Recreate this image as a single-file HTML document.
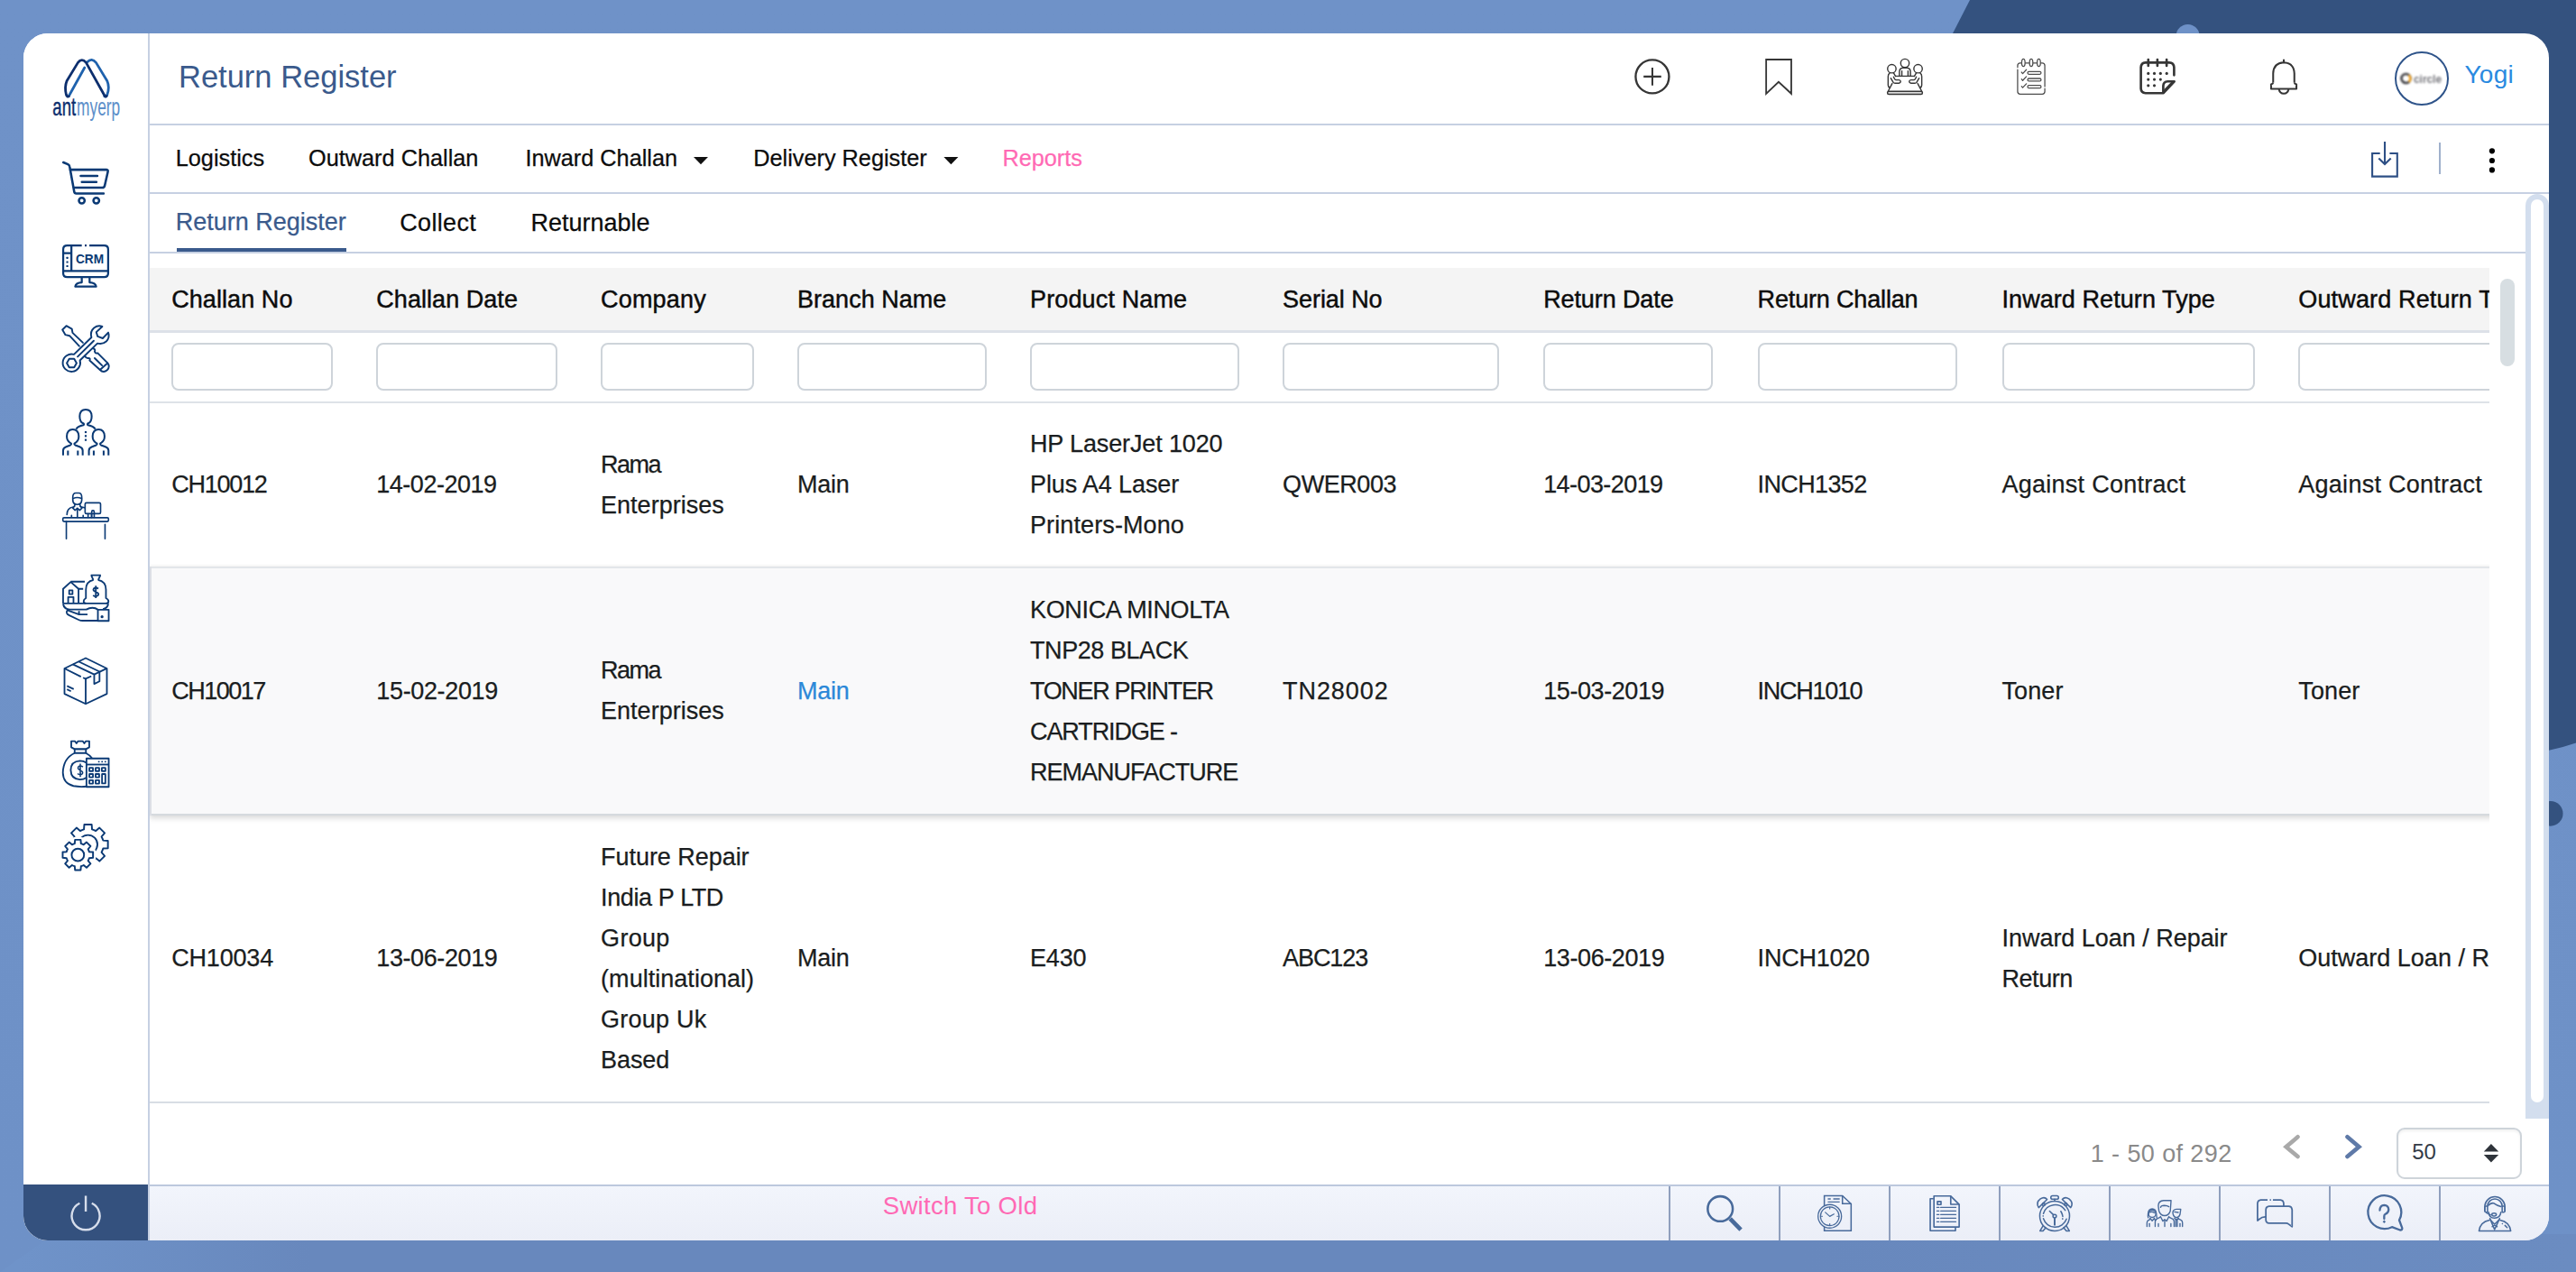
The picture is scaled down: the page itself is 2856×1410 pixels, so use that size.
<!DOCTYPE html>
<html>
<head>
<meta charset="utf-8">
<title>Return Register</title>
<style>
*{box-sizing:border-box;margin:0;padding:0}
html,body{width:2856px;height:1410px;overflow:hidden}
body{font-family:"Liberation Sans",sans-serif;background:#6e91c7;position:relative;color:#212529;-webkit-font-smoothing:antialiased}
#bg{position:absolute;left:0;top:0;width:2856px;height:1410px}
#card{position:absolute;left:26px;top:37px;width:2800px;height:1338px;background:#fff;border-radius:27px;overflow:hidden}
.abs{position:absolute}
.t{position:absolute;white-space:nowrap;line-height:1}
.hl{position:absolute;height:2px;background:#c6d0e2}
.vl{position:absolute;width:2px;background:#c6d0e2}
/* sidebar */
#side{position:absolute;left:0;top:0;width:139px;height:1338px;background:#fff}
.sic{position:absolute;left:43px;width:52px;height:52px}
.sic svg{width:52px;height:52px;overflow:visible}
/* header */
.title{left:172px;top:30.6px;font-size:34.5px;color:#3a5a8c}
.hic{position:absolute}
/* nav */
.nav{font-size:25.3px;top:125.6px;color:#0c0c0c;-webkit-text-stroke:0.25px}
.tab{font-size:27px;color:#0c0c0c;-webkit-text-stroke:0.25px}
/* table */
#tbl{position:absolute;left:140px;top:260px;width:2594px;height:927px;overflow:hidden}
.th{position:absolute;top:0;font-size:27px;color:#0c0c0c;-webkit-text-stroke-width:0.45px;white-space:nowrap;line-height:1}
.fi{position:absolute;top:82.8px;height:53.6px;border:2px solid #ced4da;border-radius:8px;background:#fff}
.row{position:absolute;left:0;width:2700px}
.c{position:absolute;top:0;height:100%;display:flex;align-items:center;font-size:27px;line-height:45px;white-space:nowrap;color:#1a1d20;-webkit-text-stroke-width:0.25px}
.r2{background:#f9f9fa;box-shadow:inset 2px 0 0 #dcdfe5,inset 0 2px 0 #e3e6ea,inset 0 -2px 0 #d6dade,0 3px 6px rgba(0,0,0,.15),0 -1px 3px rgba(0,0,0,.04)}
/* footer */
#foot{position:absolute;left:140px;top:1277px;width:2660px;height:61px;background:linear-gradient(#f2f5fc,#ebeef7)}
.fc{position:absolute;top:0;height:61px;width:2px;background:#8f9fbd}
</style>
</head>
<body>
<svg id="bg" viewBox="0 0 2856 1410">
  <defs>
    <linearGradient id="bgg" x1="0" y1="0" x2="0" y2="1">
      <stop offset="0" stop-color="#6f92c8"/>
      <stop offset="1" stop-color="#6e91c7"/>
    </linearGradient>
  </defs>
  <rect width="2856" height="1410" fill="url(#bgg)"/>
  <linearGradient id="bgb" x1="0" y1="0" x2="1" y2="0">
    <stop offset="0.008" stop-color="#6f93c9"/><stop offset="0.12" stop-color="#6888bd"/><stop offset="0.7" stop-color="#6888bd"/><stop offset="1" stop-color="#6b8cc1"/>
  </linearGradient>
  <path d="M60 1368 H2856 V1410 H0 Z" fill="url(#bgb)"/>
  <path d="M2184 0 L2856 0 L2856 823.4 Q2841 828.5 2826 831.8 L2500 900 L2165 37 Z" fill="#34527f"/>
  <circle cx="2425.6" cy="40" r="13" fill="#6e91c7"/>
  <circle cx="2827.7" cy="901.8" r="13.85" fill="#34527f"/>
</svg>

<div id="card">
  <!-- SIDEBAR -->
  <div id="side">
<svg class="abs" style="left:24px;top:18px" width="90" height="85" viewBox="0 0 1347 1272" overflow="visible">
<g fill="none" stroke-width="42" stroke-linecap="round" stroke-linejoin="round">
<path d="M400 760 L655 300" stroke="#1f62ad"/>
<path d="M700 205 Q775 130 845 215 L1030 520 Q1075 620 1030 750 Q1015 790 985 775" stroke="#1f62ad"/>
<path d="M395 775 Q365 790 350 745 Q320 620 360 520 L545 215 Q610 130 680 215 L985 760 Q1000 790 1020 770" stroke="#0d2f6e"/>
</g>
<text x="125" y="1100" font-family="Liberation Sans, sans-serif" font-size="400" fill="#0d2f6e" stroke="#0d2f6e" stroke-width="7" textLength="385" lengthAdjust="spacingAndGlyphs">ant</text>
<text x="525" y="1100" font-family="Liberation Sans, sans-serif" font-size="400" fill="#5d8fca" stroke="#5d8fca" stroke-width="1" textLength="720" lengthAdjust="spacingAndGlyphs">myerp</text>
</svg>
<svg class="abs" style="left:43px;top:142px" width="52" height="52" viewBox="176 176 1018 1018" overflow="visible"><g fill="none" stroke="#0b3a75" stroke-width="50" stroke-linecap="round" stroke-linejoin="round" >
<path d="M200 195 L300 238 Q332 254 338 292 L436 832 Q442 870 482 870 L1075 870"/>
<path d="M352 355 L1138 355 Q1176 358 1166 400 L1096 708 Q1086 745 1048 745 L440 745"/>
<path d="M577 490 H938 M602 620 H918"/>
<circle cx="600" cy="1025" r="62"/><circle cx="915" cy="1025" r="62"/>
</g></svg>
<svg class="abs" style="left:43px;top:233px" width="52" height="52" viewBox="176 176 1018 1018" overflow="visible"><g fill="none" stroke="#0b3a75" stroke-width="44" stroke-linecap="butt" stroke-linejoin="round" >
<path d="M600 217 H285 Q197 217 197 302 V818 Q197 905 285 905 H1085 Q1173 905 1173 818 V302 Q1173 217 1085 217 H765"/>
<path d="M665 217 H705"/>
<path d="M197 770 H1173 M375 217 V770 M197 385 H375"/>
<path d="M600 905 V1020 Q470 1022 458 1110 H912 Q900 1022 770 1020 V905"/>
</g>
<g fill="#0b3a75"><rect x="264" y="467" width="42" height="42" rx="8"/><rect x="264" y="557" width="42" height="42" rx="8"/><rect x="264" y="645" width="42" height="42" rx="8"/></g>
<text x="468" y="602" font-family="Liberation Sans, sans-serif" font-weight="bold" font-size="300" fill="#0b3a75" textLength="610" lengthAdjust="spacingAndGlyphs">CRM</text>
</svg>
<svg class="abs" style="left:43px;top:324px" width="52" height="52" viewBox="176 176 1018 1018" overflow="visible"><g fill="none" stroke="#0b3a75" stroke-width="38" stroke-linecap="round" stroke-linejoin="round" >
<path d="M625 545 L400 330 L385 245 L265 180 L180 265 L245 375 L335 395 L545 620"/>
<path d="M840 665 Q905 690 880 735 Q900 790 945 770 L1160 985 Q1225 1065 1150 1140 Q1070 1210 990 1130 L770 930 Q795 880 740 880 Q700 890 670 835"/>
<path d="M880 880 L1040 1040 M1000 1130 L1160 990"/>
<path d="M430 800 L810 430 Q775 300 865 225 Q950 160 1045 195 L915 315 L945 410 L1055 450 L1175 325 Q1215 430 1130 520 Q1050 590 940 560 L560 930 A190 190 0 1 1 430 800 Z"/>
<path d="M510 850 L860 505"/>
<path d="M275 990 L328 897 L435 897 L488 990 L435 1083 L328 1083 Z"/>
</g></svg>
<svg class="abs" style="left:43px;top:416px" width="52" height="52" viewBox="176 176 1018 1018" overflow="visible"><g fill="none" stroke="#0b3a75" stroke-width="40" stroke-linecap="butt" stroke-linejoin="round" >
<path d="M478 618 Q520 560 632 535 Q668 512 622 490 Q555 452 555 340 Q560 195 685 195 Q810 195 815 340 Q815 452 748 490 Q702 512 738 535 Q850 560 895 618"/>
<path d="M195 1190 V1085 Q195 1030 262 1003 L352 968 Q400 940 342 912 Q275 872 275 775 Q280 625 405 625 Q530 625 535 775 Q535 872 468 912 Q412 940 458 968 L553 1003 Q620 1030 620 1085 V1190"/><path d="M300 1085 V1190 M515 1085 V1190"/><path d="M755 1190 V1085 Q755 1030 822 1003 L912 968 Q960 940 902 912 Q835 872 835 775 Q840 625 965 625 Q1090 625 1095 775 Q1095 872 1028 912 Q972 940 1018 968 L1113 1003 Q1180 1030 1180 1085 V1190"/><path d="M860 1085 V1190 M1075 1085 V1190"/></g>
<g fill="#0b3a75"><rect x="664" y="664" width="42" height="42"/><rect x="664" y="748" width="42" height="42"/><rect x="664" y="834" width="42" height="42"/></g>
</svg>
<svg class="abs" style="left:43px;top:507.5px" width="52" height="52" viewBox="176 176 1018 1018" overflow="visible"><g fill="none" stroke="#0b3a75" stroke-width="32" stroke-linecap="round" stroke-linejoin="round" >
<rect x="190" y="740" width="990" height="85" rx="25"/>
<path d="M265 825 V1200 M1105 885 V1200"/>
<rect x="672" y="418" width="336" height="236" rx="28"/>
<path d="M737 655 V735 M812 655 V735"/>
<path d="M815 735 V615 Q815 585 842 585 Q870 585 870 615 V735"/>
<path d="M405 300 Q405 205 470 205 H535 Q600 205 600 300 V360 Q595 455 502 455 Q410 455 405 360 Z"/>
<path d="M410 325 Q500 280 595 325"/>
<path d="M452 450 L440 495 M558 450 L570 495"/>
<path d="M440 495 L405 530 L455 580 L505 535 L555 580 L605 530 L570 495"/>
<path d="M505 540 V735"/>
<path d="M415 508 Q275 530 278 675"/>
<path d="M595 508 L660 525"/>
<path d="M378 690 V725 M630 690 V725"/>
</g></svg>
<svg class="abs" style="left:43px;top:600px" width="52" height="52" viewBox="176 176 1018 1018" overflow="visible"><g fill="none" stroke="#0b3a75" stroke-width="36" stroke-linecap="butt" stroke-linejoin="round" >
<path d="M195 800 V485 L360 335 L530 485 V800"/>
<path d="M360 327 H665 M530 485 H630"/>
<rect x="327" y="517" width="72" height="82"/>
<path d="M305 800 V662 H420 V800"/>
<path d="M185 800 H1185"/>
<path d="M195 812 Q215 925 340 932 H700 Q760 895 830 895 Q900 895 950 935 M1060 925 Q1160 900 1175 812"/>
<path d="M795 187 H1015 M805 190 L850 290 M1005 190 L957 290"/>
<path d="M855 290 Q690 320 690 500 V685 Q640 712 640 752 Q640 792 690 797"/>
<path d="M952 290 Q1125 320 1125 500 V685 Q1180 712 1180 752 Q1180 792 1130 797"/>
<path d="M330 937 Q258 950 275 1010 Q285 1040 330 1060 L540 1160 Q570 1175 620 1175 H950"/>
<path d="M300 952 L540 1040 H725 M540 962 V1040"/>
<rect x="950" y="937" width="235" height="243"/>
<path d="M960 478 Q900 440 860 478 Q830 520 905 550 Q985 580 955 625 Q910 665 845 625 M905 415 V685"/>
</g><circle cx="1040" cy="1090" r="32" fill="#0b3a75"/></svg>
<svg class="abs" style="left:43px;top:692px" width="52" height="52" viewBox="176 176 1018 1018" overflow="visible"><g fill="none" stroke="#0b3a75" stroke-width="36" stroke-linecap="butt" stroke-linejoin="round" >
<path d="M685 185 L1145 410 V960 L685 1180 L225 960 V410 Z"/>
<path d="M685 635 V1180"/>
<path d="M225 410 L582 590 M628 612 L685 635 L807 578 M870 540 L1145 410"/>
<path d="M405 320 L870 540 V745 L985 690 V480 L530 260"/>
<path d="M280 790 L425 860 M280 865 L365 905"/>
</g></svg>
<svg class="abs" style="left:43px;top:784px" width="52" height="52" viewBox="176 176 1018 1018" overflow="visible"><g fill="none" stroke="#0b3a75" stroke-width="36" stroke-linecap="butt" stroke-linejoin="round" >
<path d="M372 187 H450 L485 235 L520 187 H620 L655 235 L690 187 H763 V320 L690 360 H445 L372 320 Z"/>
<rect x="445" y="360" width="245" height="85"/>
<path d="M445 445 Q200 560 190 870 Q195 1100 420 1160 Q560 1185 700 1170"/>
<path d="M690 445 Q770 490 820 552"/>
<path d="M700 655 Q640 615 560 615 Q365 625 360 815 Q365 1010 560 1020 Q640 1020 700 980"/>
<rect x="702" y="562" width="483" height="618"/>
<path d="M702 695 H1185"/>
</g><g fill="none" stroke="#0b3a75" stroke-width="30" stroke-linecap="butt" stroke-linejoin="round" >
<path d="M625 745 Q565 705 525 745 Q500 790 568 820 Q640 850 612 895 Q570 935 508 895 M568 675 V965"/>
</g><g fill="none" stroke="#0b3a75" stroke-width="36" stroke-linecap="butt" stroke-linejoin="round" ><rect x="765" y="765" width="78" height="72" rx="6"/><rect x="900" y="765" width="78" height="72" rx="6"/><rect x="1035" y="765" width="78" height="72" rx="6"/><rect x="765" y="900" width="78" height="72" rx="6"/><rect x="900" y="900" width="78" height="72" rx="6"/><rect x="765" y="1035" width="78" height="72" rx="6"/><rect x="900" y="1035" width="78" height="72" rx="6"/><rect x="1040" y="900" width="72" height="205" rx="6"/></g>
<g fill="#0b3a75"><rect x="955" y="617" width="32" height="32"/><rect x="1025" y="617" width="32" height="32"/><rect x="1095" y="617" width="32" height="32"/></g>
</svg>
<svg class="abs" style="left:43px;top:876px" width="52" height="52" viewBox="176 176 1018 1018" overflow="visible"><g fill="none" stroke="#0b3a75" stroke-width="38" stroke-linecap="round" stroke-linejoin="round" ><path d="M647.0 299.6 L654.8 195.4 L815.2 195.4 L823.0 299.6 A340 340 0 0 1 905.0 333.6 L984.2 265.4 L1097.6 378.8 L1029.4 458.0 A340 340 0 0 1 1063.4 540.0 L1167.6 547.8 L1167.6 708.2 L1063.4 716.0 A340 340 0 0 1 1029.4 798.0 L1097.6 877.2 L984.2 990.6 L905.0 922.4 A340 340 0 0 1 823.0 956.4 L815.2 1060.6 L654.8 1060.6 L647.0 956.4 A340 340 0 0 1 565.0 922.4 L485.8 990.6 L372.4 877.2 L440.6 798.0 A340 340 0 0 1 406.6 716.0 L302.4 708.2 L302.4 547.8 L406.6 540.0 A340 340 0 0 1 440.6 458.0 L372.4 378.8 L485.8 265.4 L565.0 333.6 A340 340 0 0 1 647.0 299.6 Z"/><circle cx="735" cy="628" r="205"/></g><circle cx="515" cy="855" r="395" fill="#fff"/><g fill="none" stroke="#0b3a75" stroke-width="38" stroke-linecap="round" stroke-linejoin="round" ><path d="M446.9 609.3 L454.0 525.6 L576.0 525.6 L583.1 609.3 A255 255 0 0 1 640.6 633.1 L704.7 578.9 L791.1 665.3 L736.9 729.4 A255 255 0 0 1 760.7 786.9 L844.4 794.0 L844.4 916.0 L760.7 923.1 A255 255 0 0 1 736.9 980.6 L791.1 1044.7 L704.7 1131.1 L640.6 1076.9 A255 255 0 0 1 583.1 1100.7 L576.0 1184.4 L454.0 1184.4 L446.9 1100.7 A255 255 0 0 1 389.4 1076.9 L325.3 1131.1 L238.9 1044.7 L293.1 980.6 A255 255 0 0 1 269.3 923.1 L185.6 916.0 L185.6 794.0 L269.3 786.9 A255 255 0 0 1 293.1 729.4 L238.9 665.3 L325.3 578.9 L389.4 633.1 A255 255 0 0 1 446.9 609.3 Z"/><circle cx="515" cy="855" r="135"/></g></svg>
  </div>
  <div class="vl" style="left:138px;top:0;height:1338px"></div>
  <div class="abs" style="left:0;top:1276px;width:138px;height:62px;background:#34517e"></div>

  <svg class="abs" style="left:30px;top:1273px" width="80" height="70" viewBox="0 0 1454 1272">
<g fill="none" stroke="#d6ddeb" stroke-width="44" stroke-linecap="butt">
<path d="M588 432 A282 282 0 1 0 832 432"/>
<path d="M710 282 V600"/>
</g></svg>
  <!-- HEADER -->
  <div class="t title">Return Register</div>
  <div class="hl" style="left:140px;top:100px;width:2660px"></div>

  <svg class="abs" style="left:1774px;top:18px" width="70" height="65" viewBox="0 0 1370 1272"><g fill="none" stroke="#363636" stroke-width="46" stroke-linecap="round" stroke-linejoin="round"><circle cx="625" cy="585" r="362"/></g><g fill="none" stroke="#363636" stroke-width="40" stroke-linecap="butt" stroke-linejoin="round"><path d="M435 585 H818 M626 392 V778"/></g></svg>
<svg class="abs" style="left:1914px;top:18px" width="70" height="65" viewBox="0 0 1370 1272"><g fill="none" stroke="#363636" stroke-width="36" stroke-linecap="butt" stroke-linejoin="miter"><path d="M355 215 H900 V955 L625 700 L355 955 Z"/></g></svg>
<svg class="abs" style="left:2051px;top:18px" width="70" height="65" viewBox="0 0 1370 1272"><g fill="none" stroke="#363636" stroke-width="28" stroke-linecap="round" stroke-linejoin="round">
<circle cx="685" cy="295" r="92"/>
<path d="M565 575 V478 Q568 398 645 395 H725 Q802 398 805 478 V575"/>
<path d="M618 462 V575 M752 462 V575"/>
<circle cx="400" cy="415" r="92"/><path d="M352 512 Q320 535 320 580 V770 Q322 810 352 822"/><path d="M442 512 L482 578"/><path d="M378 620 L432 712 Q445 728 470 728 H555 Q592 725 592 692 Q590 660 555 658 H490 Q470 655 460 635 L438 592"/><circle cx="970" cy="415" r="92"/><path d="M1018 512 Q1050 535 1050 580 V770 Q1048 810 1018 822"/><path d="M928 512 L888 578"/><path d="M992 620 L938 712 Q925 728 900 728 H815 Q778 725 778 692 Q780 660 815 658 H880 Q900 655 910 635 L932 592"/>
<path d="M490 575 H880"/>
<path d="M408 735 L322 900 M962 735 L1048 900"/>
</g><rect x="305" y="905" width="760" height="62" rx="30" fill="#dcdcdc" stroke="#363636" stroke-width="28"/></svg>
<svg class="abs" style="left:2191px;top:18px" width="70" height="65" viewBox="0 0 1370 1272"><g fill="none" stroke="#4c4c4c" stroke-width="25" stroke-linecap="round" stroke-linejoin="round">
<path d="M390 385 V345 Q392 292 445 290 H925 Q978 292 980 345 V800 M980 845 V910 Q978 963 925 965 H445 Q392 963 390 910 V435"/>
<ellipse cx="515" cy="285" rx="36" ry="80" fill="#fff"/><ellipse cx="685" cy="285" rx="36" ry="80" fill="#fff"/><ellipse cx="850" cy="285" rx="36" ry="80" fill="#fff"/>
<path d="M475 490 L500 520 L580 435"/><path d="M475 640 L500 670 L580 585"/><path d="M475 795 L500 825 L580 740"/>
<rect x="607" y="476" width="292" height="58" rx="29"/><rect x="607" y="626" width="292" height="58" rx="29"/><rect x="607" y="776" width="292" height="58" rx="29"/>
</g></svg>
<svg class="abs" style="left:2331px;top:18px" width="70" height="65" viewBox="0 0 1370 1272"><g fill="none" stroke="#363636" stroke-width="52" stroke-linecap="round" stroke-linejoin="round">
<path d="M1045 555 V385 Q1040 285 940 280 H425 Q330 285 325 385 V845 Q330 940 425 945 H810 L1050 690 H905 Q815 695 810 785 V945"/>
<path d="M485 215 V350 M683 215 V350 M883 215 V350"/>
</g><path d="M810 945 L1050 690 L985 700 L830 860 Z" fill="#363636"/><g fill="#363636"><circle cx="485" cy="517" r="31"/><circle cx="617" cy="517" r="31"/><circle cx="750" cy="517" r="31"/><circle cx="885" cy="517" r="31"/><circle cx="485" cy="648" r="31"/><circle cx="617" cy="648" r="31"/><circle cx="750" cy="648" r="31"/><circle cx="485" cy="780" r="31"/><circle cx="617" cy="780" r="31"/></g></svg>
<svg class="abs" style="left:2471px;top:18px" width="70" height="65" viewBox="0 0 1370 1272"><g fill="none" stroke="#363636" stroke-width="40" stroke-linecap="butt" stroke-linejoin="round">
<path d="M685 210 V278"/>
<path d="M455 715 V520 Q460 290 685 280 Q910 290 915 520 V715"/>
<path d="M455 715 Q450 745 410 752 V850 H960 V752 Q920 745 915 715"/>
<path d="M580 860 Q600 950 685 955 Q770 950 790 860"/>
</g></svg>
<div class="abs" style="left:2629px;top:20px;width:60px;height:60px;border:2px solid #2f548a;border-radius:50%"></div>
<svg class="abs" style="left:2634px;top:40px;filter:blur(0.8px)" width="50" height="20" viewBox="0 0 50 20">
<circle cx="7.5" cy="10" r="5" fill="none" stroke="#3a3a3f" stroke-width="2.6"/>
<path d="M10.6 6.2 A5 5 0 0 1 10.6 13.8" fill="none" stroke="#f5a623" stroke-width="2.6"/>
<text x="16" y="14.5" font-family="Liberation Sans, sans-serif" font-weight="bold" font-size="13.5" fill="#77777d" textLength="31" lengthAdjust="spacingAndGlyphs">circle</text>
</svg>
<div class="t" style="left:2706.4px;top:31.75px;font-size:28px;letter-spacing:0.3px;color:#2a8ae0">Yogi</div>
  <!-- NAV -->
  <div class="t nav" style="left:168.7px">Logistics</div>
  <div class="t nav" style="left:316.0px">Outward Challan</div>
  <div class="t nav" style="left:556.4px">Inward Challan</div>
  <div class="t nav" style="left:809.2px">Delivery Register</div>
  <div class="t nav" style="left:1085.4px;color:#ff69b4">Reports</div>
  <div class="hl" style="left:140px;top:176px;width:2660px"></div>

  <!-- TABS -->
  <div class="t tab" style="left:168.7px;top:195.5px;color:#3a5a8c">Return Register</div>
  <div class="t tab" style="left:417.2px;top:196.8px;letter-spacing:0.34px">Collect</div>
  <div class="t tab" style="left:562.4px;top:196.8px">Returnable</div>
  <div class="abs" style="left:169.9px;top:237.5px;width:188px;height:5px;background:#3a5a8c"></div>
  <div class="hl" style="left:140px;top:242px;width:2634px"></div>

  <svg class="abs" style="left:740px;top:135px" width="300" height="12" viewBox="0 0 300 12">
<path d="M3 2 H19 L11 10.2 Z" fill="#111"/><path d="M280.4 2 H296.4 L288.4 10.2 Z" fill="#111"/></svg>
<svg class="abs" style="left:2594px;top:113px" width="50" height="52" viewBox="0 0 50 52">
<g fill="none" stroke="#2d4f85" stroke-width="2.1" stroke-linecap="butt" stroke-linejoin="miter">
<path d="M18.7 20 H10.1 V45.6 H37.8 V20 H29.4"/>
<path d="M24 7 V31.5 M17.3 25.4 L24 32.1 L30.7 25.4"/>
</g></svg>
<div class="abs" style="left:2678px;top:121px;width:2px;height:35px;background:#9fb0cc"></div>
<svg class="abs" style="left:2727px;top:120px" width="20" height="40" viewBox="0 0 20 40">
<circle cx="9.9" cy="10.3" r="3.1" fill="#000"/><circle cx="9.9" cy="21" r="3.1" fill="#000"/><circle cx="9.9" cy="31.4" r="3.1" fill="#000"/></svg>
<!-- outer scrollbar -->
<div class="abs" style="left:2774px;top:178px;width:26px;height:1025px;background:#d3deee;border-radius:13px 13px 0 0"></div>
<div class="abs" style="left:2780px;top:184px;width:14px;height:1001px;background:#fff;border-radius:7px"></div>
<!-- inner scrollbar -->
<div class="abs" style="left:2746px;top:272px;width:16px;height:97px;background:#d7dee2;border-radius:8px"></div>

  <!-- TABLE -->
  <div id="tbl">
    <div class="abs" style="left:0;top:0;width:2594px;height:69px;background:#f4f4f4"></div>
    <div class="abs" style="left:0;top:69px;width:2594px;height:3px;background:#dde1e8"></div>
    <div class="th" style="left:24.2px;top:21.6px;letter-spacing:0.07px">Challan No</div>
    <div class="th" style="left:251.3px;top:21.6px;letter-spacing:0.05px">Challan Date</div>
    <div class="th" style="left:500.1px;top:21.6px;letter-spacing:0.17px">Company</div>
    <div class="th" style="left:718.1px;top:21.6px;letter-spacing:0px">Branch Name</div>
    <div class="th" style="left:976px;top:21.6px;letter-spacing:0.14px">Product Name</div>
    <div class="th" style="left:1256.1px;top:21.6px;letter-spacing:-0.07px">Serial No</div>
    <div class="th" style="left:1545.2px;top:21.6px;letter-spacing:-0.11px">Return Date</div>
    <div class="th" style="left:1782.6px;top:21.6px;letter-spacing:-0.16px">Return Challan</div>
    <div class="th" style="left:2053.5px;top:21.6px;letter-spacing:0.07px">Inward Return Type</div>
    <div class="th" style="left:2382.3px;top:21.6px;letter-spacing:0.15px">Outward Return Type</div>
    <div class="fi" style="left:24.2px;width:178.7px"></div>
    <div class="fi" style="left:251.3px;width:200.4px"></div>
    <div class="fi" style="left:500.1px;width:169.6px"></div>
    <div class="fi" style="left:718.1px;width:209.5px"></div>
    <div class="fi" style="left:976px;width:231.7px"></div>
    <div class="fi" style="left:1256.1px;width:240.3px"></div>
    <div class="fi" style="left:1545.2px;width:188.1px"></div>
    <div class="fi" style="left:1782.6px;width:221.6px"></div>
    <div class="fi" style="left:2053.5px;width:280px"></div>
    <div class="fi" style="left:2382.3px;width:300px"></div>
    <div class="abs" style="left:0;top:147.5px;width:2594px;height:2px;background:#dee2e8"></div>
    <div class="row " style="top:149px;height:183px">
      <div class="c" style="left:24.2px"><div><span style="letter-spacing:-1.23px">CH10012</span></div></div>
      <div class="c" style="left:251.3px"><div><span style="letter-spacing:-0.49px">14-02-2019</span></div></div>
      <div class="c" style="left:500.1px"><div><span style="letter-spacing:-1.5px">Rama</span><br><span>Enterprises</span></div></div>
      <div class="c" style="left:718.1px"><div><span style="letter-spacing:-0.3px">Main</span></div></div>
      <div class="c" style="left:976px"><div><span style="letter-spacing:-0.14px">HP LaserJet 1020</span><br><span style="letter-spacing:-0.12px">Plus A4 Laser</span><br><span style="letter-spacing:0.11px">Printers-Mono</span></div></div>
      <div class="c" style="left:1256.1px"><div><span style="letter-spacing:-0.44px">QWER003</span></div></div>
      <div class="c" style="left:1545.2px"><div><span style="letter-spacing:-0.58px">14-03-2019</span></div></div>
      <div class="c" style="left:1782.6px"><div><span style="letter-spacing:-0.64px">INCH1352</span></div></div>
      <div class="c" style="left:2053.5px"><div><span style="letter-spacing:0.26px">Against Contract</span></div></div>
      <div class="c" style="left:2382.3px"><div><span style="letter-spacing:0.26px">Against Contract</span></div></div>
    </div>
    <div class="row r2" style="top:331px;height:276px">
      <div class="c" style="left:24.2px"><div><span style="letter-spacing:-1.5px">CH10017</span></div></div>
      <div class="c" style="left:251.3px"><div><span style="letter-spacing:-0.35px">15-02-2019</span></div></div>
      <div class="c" style="left:500.1px"><div><span style="letter-spacing:-1.5px">Rama</span><br><span>Enterprises</span></div></div>
      <div class="c" style="left:718.1px"><div><span style="letter-spacing:-0.3px;color:#2b88d8">Main</span></div></div>
      <div class="c" style="left:976px"><div><span style="letter-spacing:-0.34px">KONICA MINOLTA</span><br><span style="letter-spacing:-0.43px">TNP28 BLACK</span><br><span style="letter-spacing:-1.33px">TONER PRINTER</span><br><span style="letter-spacing:-1.09px">CARTRIDGE -</span><br><span style="letter-spacing:-0.98px">REMANUFACTURE</span></div></div>
      <div class="c" style="left:1256.1px"><div><span style="letter-spacing:0.92px">TN28002</span></div></div>
      <div class="c" style="left:1545.2px"><div><span style="letter-spacing:-0.42px">15-03-2019</span></div></div>
      <div class="c" style="left:1782.6px"><div><span style="letter-spacing:-1.29px">INCH1010</span></div></div>
      <div class="c" style="left:2053.5px"><div><span style="letter-spacing:0.11px">Toner</span></div></div>
      <div class="c" style="left:2382.3px"><div><span style="letter-spacing:0.11px">Toner</span></div></div>
    </div>
    <div class="row " style="top:606px;height:319px">
      <div class="c" style="left:24.2px"><div><span style="letter-spacing:-0.18px">CH10034</span></div></div>
      <div class="c" style="left:251.3px"><div><span style="letter-spacing:-0.4px">13-06-2019</span></div></div>
      <div class="c" style="left:500.1px"><div><span style="letter-spacing:-0.05px">Future Repair</span><br><span style="letter-spacing:-0.38px">India P LTD</span><br><span style="letter-spacing:0.29px">Group</span><br><span style="letter-spacing:0.03px">(multinational)</span><br><span style="letter-spacing:0.22px">Group Uk</span><br><span style="letter-spacing:-0.09px">Based</span></div></div>
      <div class="c" style="left:718.1px"><div><span style="letter-spacing:-0.3px">Main</span></div></div>
      <div class="c" style="left:976px"><div><span style="letter-spacing:-0.15px">E430</span></div></div>
      <div class="c" style="left:1256.1px"><div><span style="letter-spacing:-1.1px">ABC123</span></div></div>
      <div class="c" style="left:1545.2px"><div><span style="letter-spacing:-0.4px">13-06-2019</span></div></div>
      <div class="c" style="left:1782.6px"><div><span style="letter-spacing:-0.22px">INCH1020</span></div></div>
      <div class="c" style="left:2053.5px"><div><span style="letter-spacing:-0.03px">Inward Loan / Repair</span><br><span style="letter-spacing:-0.45px">Return</span></div></div>
      <div class="c" style="left:2382.3px"><div><span>Outward Loan / Repair Return</span></div></div>
    </div>
    <div class="abs" style="left:0;top:923.5px;width:2594px;height:2px;background:#d8dde4"></div>
  </div><!--/tbl-->

  <div class="t" style="left:2291.8px;top:1228.9px;font-size:27px;letter-spacing:0.4px;color:#8a8a8a">1 - 50 of 292</div>
<svg class="abs" style="left:2500px;top:1215px" width="100" height="40" viewBox="0 0 100 40">
<g fill="none" stroke-width="4.6" stroke-linecap="round" stroke-linejoin="miter">
<path d="M21.5 8.3 L8.6 19.2 L21.5 30" stroke="#a9a9a9"/>
<path d="M76.5 8.3 L89.4 19.2 L76.5 30" stroke="#5f7aa8"/>
</g></svg>
<div class="abs" style="left:2630.5px;top:1212.5px;width:139px;height:57px;border:2px solid #ced4da;border-radius:9px;background:#fff;box-shadow:inset 0 2px 3px rgba(0,0,0,.06)"></div>
<div class="t" style="left:2648.2px;top:1228px;font-size:24px;color:#343c48">50</div>
<svg class="abs" style="left:2725px;top:1228px" width="24" height="26" viewBox="0 0 24 26">
<path d="M10.9 3 L19.2 11.5 H2.8 Z M2.8 15.1 H19.2 L10.9 23.5 Z" fill="#2f343b"/></svg>

  <!-- FOOTER -->
  <div id="foot">
<div class="t" style="left:812.8px;top:9.4px;font-size:27.5px;letter-spacing:0.3px;color:#ff69b4">Switch To Old</div>
<div class="fc" style="left:1683.8px"></div>
<div class="fc" style="left:1806px"></div>
<div class="fc" style="left:1927.8000000000002px"></div>
<div class="fc" style="left:2050px"></div>
<div class="fc" style="left:2172px"></div>
<div class="fc" style="left:2294px"></div>
<div class="fc" style="left:2416px"></div>
<div class="fc" style="left:2538px"></div>
<svg class="abs" style="left:1706px;top:-4px" width="80" height="70" viewBox="0 0 1454 1272"><g fill="none" stroke="#486a9b" stroke-width="46" stroke-linecap="round" stroke-linejoin="round"><circle cx="640" cy="545" r="252"/></g><g fill="none" stroke="#486a9b" stroke-width="86" stroke-linecap="butt" stroke-linejoin="round"><path d="M838 742 L1055 965"/></g></svg>
<svg class="abs" style="left:1828px;top:-4px" width="80" height="70" viewBox="0 0 1454 1272"><g fill="none" stroke="#486a9b" stroke-width="28" stroke-linecap="butt" stroke-linejoin="miter">
<path d="M520 282 H885 L1060 445 V985 H520 Z"/>
<path d="M885 282 V442 H1060"/>
<path d="M590 347 H650 M700 347 H830"/>
</g><g fill="none" stroke="#486a9b" stroke-width="22" stroke-linecap="butt" stroke-linejoin="round"><path d="M590 406 H830"/></g><circle cx="630" cy="695" r="236" fill="#eef1f9" stroke="#486a9b" stroke-width="24"/><g fill="none" stroke="#486a9b" stroke-width="22" stroke-linecap="round" stroke-linejoin="round"><circle cx="630" cy="695" r="188"/>
<path d="M540 615 L630 697 L715 650"/>
<path d="M630 510 V545 M630 845 V880 M445 695 H480 M780 695 H815"/></g></svg>
<svg class="abs" style="left:1950px;top:-4px" width="80" height="70" viewBox="0 0 1454 1272"><g fill="none" stroke="#486a9b" stroke-width="30" stroke-linecap="butt" stroke-linejoin="round">
<path d="M505 340 H437 V985 H945 V915"/>
<path d="M512 287 H850 L1020 455 V910 H512 Z"/>
<path d="M850 287 V455 H1020"/>
<rect x="582" y="397" width="72" height="62"/>
</g><g fill="none" stroke="#486a9b" stroke-width="22" stroke-linecap="round" stroke-linejoin="round"><path d="M570 517 H615 M647 517 H955"/><path d="M570 588 H615 M647 588 H955"/><path d="M570 660 H615 M647 660 H955"/><path d="M570 733 H615 M647 733 H955"/><path d="M570 805 H615 M647 805 H955"/></g></svg>
<svg class="abs" style="left:2072px;top:-4px" width="80" height="70" viewBox="0 0 1454 1272"><g fill="none" stroke="#486a9b" stroke-width="28" stroke-linecap="round" stroke-linejoin="round">
<circle cx="727" cy="690" r="300"/>
<path d="M500 640 A245 245 0 0 1 940 575"/>
<path d="M500 740 A245 245 0 0 0 965 750"/>
<rect x="650" y="282" width="155" height="68" rx="34"/>
<path d="M727 350 V390"/>
<path d="M405 520 L575 355 Q520 290 440 345 Q340 420 405 520 Z"/>
<path d="M1050 520 L880 355 Q935 290 1015 345 Q1115 420 1050 520 Z"/>
<circle cx="505" cy="455" r="26"/><circle cx="950" cy="455" r="26"/>
<path d="M495 885 L432 990 H492 L545 925"/>
<path d="M960 885 L1023 990 H963 L910 925"/>
<path d="M702 665 L625 590"/>
<path d="M852 595 Q885 650 890 700"/>
<circle cx="727" cy="692" r="34"/>
</g><g fill="none" stroke="#486a9b" stroke-width="36" stroke-linecap="butt" stroke-linejoin="round"><path d="M727 728 V880"/></g><g fill="#486a9b"><rect x="872" y="732" width="28" height="28"/><rect x="482" y="676" width="26" height="26"/></g></svg>
<svg class="abs" style="left:2194px;top:-4px" width="80" height="70" viewBox="0 0 1454 1272"><g fill="none" stroke="#486a9b" stroke-width="25" stroke-linecap="round" stroke-linejoin="round">
<path d="M855 377 H705 Q600 385 598 480 L610 585 Q640 680 725 682 Q812 680 840 585 Z"/>
<path d="M645 515 Q650 478 720 478 Q780 480 812 502"/>
<path d="M642 700 L690 792 L727 760 L765 792 L812 700"/>
<path d="M727 790 V900"/>
<path d="M640 712 L560 752 Q535 770 535 805 V900"/>
<path d="M812 712 L892 752 Q917 770 917 805 V900"/>
<path d="M600 842 V900 M852 842 V900"/>
<circle cx="475" cy="645" r="72"/>
<path d="M395 725 Q385 690 392 640 Q400 548 475 545 Q550 548 558 640 Q562 690 568 725"/>
<path d="M425 615 Q470 595 520 625"/>
<path d="M438 752 L385 785 Q370 800 370 830 V900"/>
<path d="M430 730 L475 785 L522 730"/>
<path d="M512 752 L548 775"/>
<path d="M420 842 V900"/>
<path d="M1050 552 H965 Q890 560 890 625 L900 670 Q920 722 965 722 Q1015 720 1035 660 Z"/>
<path d="M925 607 L1000 617"/>
<path d="M1000 742 L1060 775 Q1085 790 1085 825 V900"/>
<path d="M925 735 L965 770 L1005 735"/>
<path d="M950 770 V900 M980 770 V900"/>
<path d="M1035 842 V900"/>
</g></svg>
<svg class="abs" style="left:2316px;top:-4px" width="80" height="70" viewBox="0 0 1454 1272"><g fill="none" stroke="#486a9b" stroke-width="32" stroke-linecap="butt" stroke-linejoin="round">
<path d="M548 705 Q470 700 420 750 L380 782 V432 Q385 370 445 365 H582 M690 365 H842 Q902 370 907 432 V492"/>
<path d="M628 365 H652"/>
<path d="M612 495 H1010 Q1072 500 1077 560 V905 L1005 852 Q985 837 955 835 H612 Q552 830 548 772 V558 Q552 500 612 495 Z"/>
</g></svg>
<svg class="abs" style="left:2438px;top:-4px" width="80" height="70" viewBox="0 0 1454 1272"><g fill="none" stroke="#486a9b" stroke-width="42" stroke-linecap="round" stroke-linejoin="round">
<path d="M1018 772 A335 335 0 1 0 872 912 L1035 972 Q1082 975 1078 935 Z"/>
<path d="M627 572 Q632 475 715 470 Q800 475 805 560 Q800 625 740 650 Q715 660 715 690 V745"/>
</g><rect x="693" y="783" width="44" height="44" transform="rotate(45 715 805)" fill="#486a9b"/></svg>
<svg class="abs" style="left:2560px;top:-4px" width="80" height="70" viewBox="0 0 1454 1272"><g fill="none" stroke="#486a9b" stroke-width="28" stroke-linecap="round" stroke-linejoin="round">
<path d="M525 590 V490 A203 203 0 0 1 930 490 V590"/>
<path d="M580 492 A147 147 0 0 1 875 492"/>
<path d="M580 490 H545 Q525 492 525 515 V590 Q527 612 550 612 H580 Z"/>
<path d="M875 490 H910 Q930 492 930 515 V590 Q928 612 905 612 H875 Z"/>
<path d="M602 470 Q650 425 700 430 Q760 475 850 498"/>
<path d="M602 612 Q610 730 722 732 Q835 730 850 612"/>
<path d="M562 630 L640 665"/>
<ellipse cx="712" cy="660" rx="45" ry="30"/>
<path d="M628 738 L722 960 L825 738"/>
<path d="M645 778 L772 905 M802 778 L675 905"/>
<path d="M620 772 Q430 810 408 990 H1048 Q1025 810 832 772"/>
<path d="M932 880 L975 922"/>
</g><circle cx="880" cy="846" r="14" fill="#486a9b"/></svg>
  </div>
  <div class="hl" style="left:140px;top:1275.5px;width:2660px;background:#bcc8dd"></div>
</div>
</body>
</html>
